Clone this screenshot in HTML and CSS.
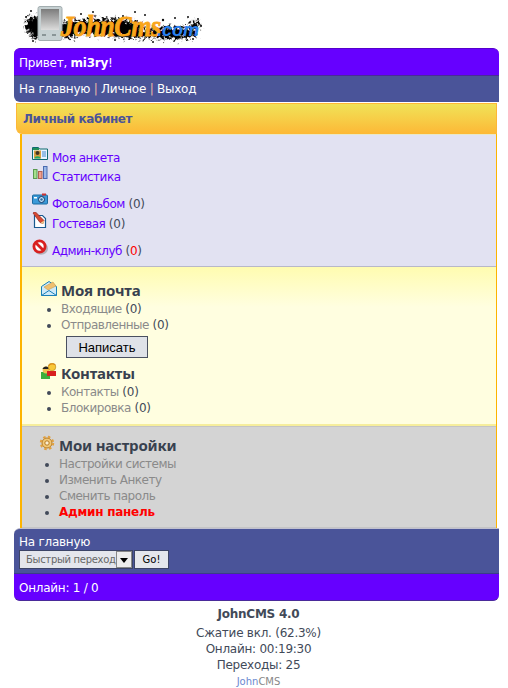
FILE: index.html
```html
<!DOCTYPE html>
<html lang="ru">
<head>
<meta charset="utf-8">
<title>Личный кабинет</title>
<link rel="stylesheet" href="styles.css">
</head>
<body>
<header class="logo">
<svg width="182" height="46" viewBox="0 0 182 46">
<defs>
<filter id="b1" x="-10%" y="-40%" width="120%" height="180%"><feTurbulence type="fractalNoise" baseFrequency=".35" numOctaves="2" seed="4" result="n"/><feGaussianBlur in="SourceGraphic" stdDeviation="1.200" result="g"/><feDisplacementMap in="g" in2="n" scale="14" xChannelSelector="R" yChannelSelector="G"/><feGaussianBlur stdDeviation=".5"/></filter>
<filter id="b2"><feGaussianBlur stdDeviation=".5"/></filter>
<linearGradient id="scr" x1="0" y1="0" x2="0" y2="1"><stop offset="0" stop-color="#7c7c7c"/><stop offset="1" stop-color="#dcdcdc"/></linearGradient>
</defs>
<g filter="url(#b1)" fill="#000">
<ellipse cx="12" cy="25" rx="10" ry="9"/><ellipse cx="15" cy="35" rx="8" ry="3"/><ellipse cx="45" cy="30" rx="10" ry="8"/>
<ellipse cx="80" cy="27" rx="40" ry="8"/><ellipse cx="148" cy="33" rx="26" ry="6"/><ellipse cx="110" cy="34" rx="22" ry="4"/><ellipse cx="172" cy="25" rx="5" ry="4"/>
</g>
<g fill="#111" filter="url(#b2)">
<circle cx="3" cy="17" r="1"/><circle cx="8" cy="11" r="1"/><circle cx="178" cy="26" r="1"/><circle cx="175" cy="19" r="1"/><circle cx="58" cy="14" r="1"/><circle cx="122" cy="15" r="1"/><circle cx="140" cy="20" r="1.200"/><circle cx="152" cy="18" r="1"/><circle cx="170" cy="39" r="1"/><circle cx="10" cy="41" r="1"/><circle cx="92" cy="40" r="1"/><circle cx="130" cy="42" r="1"/><circle cx="165" cy="17" r="1"/><circle cx="70" cy="12" r="1"/><circle cx="100" cy="16" r="1"/><circle cx="112" cy="12" r="1"/>
</g>
<rect x="15" y="6.500" width="24" height="34" rx="2" fill="#c6d0d2" stroke="#a2adaf"/>
<rect x="18" y="9" width="18" height="21" fill="url(#scr)"/>
<rect x="19" y="34" width="4" height="2" fill="#8a9597"/><rect x="29" y="34" width="4" height="2" fill="#8a9597"/>
<text transform="translate(38 36) scale(1 1.150)" class="logo-john">JohnCms</text>
<text x="134" y="36" class="logo-com">.com</text>
</svg>
</header>

<div class="top-bar">Привет, <b>mi3ry</b>!</div>
<nav class="nav-bar">На главную <span class="sep">|</span> Личное <span class="sep">|</span> Выход</nav>

<main class="cabinet">
<h1 class="cab-title">Личный кабинет</h1>
<div class="cab-body">
<section class="menu">
<div class="menu-group g1">
<div class="menu-row"><svg class="ic" viewBox="0 0 16 16"><path d="M.5 1.500h6l1 1.500h8v10.500H.500z" fill="#e8f4ff" stroke="#0f6a70"/><path d="M1 2h6v2H1z" fill="#22905a"/><rect x="2" y="4.500" width="7" height="8" fill="#d8a040"/><circle cx="5.500" cy="7" r="2" fill="#432"/><path d="M2.500 12.500c0-3 6-3 6 0z" fill="#2a6"/><path d="M10 6h4M10 8h4M10 10h4" stroke="#48c"/></svg><a>Моя анкета</a></div>
<div class="menu-row"><svg class="ic" viewBox="0 0 16 16"><rect x="1.500" y="4.500" width="3.500" height="9" fill="#a4e08c" stroke="#5a9a50"/><rect x="6.500" y="6.500" width="3.500" height="7" fill="#f0a090" stroke="#b06050"/><rect x="11.500" y="1.500" width="3.500" height="12" fill="#9ab8e8" stroke="#4a6ab0"/></svg><a>Статистика</a></div>
</div>
<div class="menu-group g2">
<div class="menu-row"><svg class="ic" viewBox="0 0 16 16"><rect x=".5" y="3" width="15" height="9" rx="1" fill="#3b9ad8" stroke="#1a6aa0"/><rect x="10" y="1.500" width="4" height="2" fill="#c33"/><circle cx="9.500" cy="7.500" r="3" fill="#bfe4fa" stroke="#136"/><circle cx="9.500" cy="7.500" r="1.200" fill="#369"/><rect x="2" y="5" width="3" height="1.500" fill="#fff"/></svg><a>Фотоальбом</a> (0)</div>
<div class="menu-row tall"><svg class="ic" viewBox="0 0 16 16"><path d="M2.500 3.500h8l3 3v9h-11z" fill="#fff" stroke="#1a5a90" stroke-width="1.200"/><path d="M1 1l2-1.500 9 9-1 3-3-1z" fill="#d84a30" stroke="#822" stroke-width=".7"/><path d="M8.500 11l3 1 .5-3.500z" fill="#f0d090"/></svg><a>Гостевая</a> (0)</div>
</div>
<div class="menu-group g3">
<div class="menu-row"><svg class="ic" viewBox="0 0 16 16"><ellipse cx="9" cy="9.500" rx="7" ry="6.200" fill="#8a8a90" opacity=".55"/><circle cx="7.500" cy="7.500" r="5.600" fill="#fff" stroke="#d82020" stroke-width="2.800"/><path d="M3.500 3.500l8 8" stroke="#d82020" stroke-width="2.800"/></svg><a>Админ-клуб</a> (<span class="red">0</span>)</div>
</div>
</section>

<section class="mail">
<h2 class="sec-head"><svg class="ic" viewBox="0 0 16 16"><path d="M.5 6.500l7.500-5 7.500 5v9H.5z" fill="#cfeaf8" stroke="#1a80b8"/><path d="M3 7l9-5 3 4-8 4z" fill="#f0c070" stroke="#c09040" stroke-width=".5"/><path d="M.5 15.500l7.500-5 7.500 5" fill="none" stroke="#1a80b8"/></svg>Моя почта</h2>
<ul>
<li><a class="grey">Входящие</a> (0)</li>
<li><a class="grey">Отправленные</a> (0)</li>
</ul>
<button class="write" type="button">Написать</button>
<h2 class="sec-head"><svg class="ic" viewBox="0 0 16 16"><rect x="0" y="9" width="9" height="7" fill="#3cae3c"/><circle cx="5" cy="7" r="3.400" fill="#f0c050"/><path d="M1.500 6c1-3.500 6-3.500 7 0z" fill="#222"/><rect x="6" y="8" width="9" height="5" fill="#d82020"/><circle cx="11" cy="4" r="3.800" fill="#f8c838" stroke="#b08010" stroke-width=".6"/><path d="M7.500 3c1.500-2.500 5-2.500 7-1" stroke="#e08010" fill="none"/></svg>Контакты</h2>
<ul>
<li><a class="grey">Контакты</a> (0)</li>
<li><a class="grey">Блокировка</a> (0)</li>
</ul>
</section>

<section class="settings">
<h2 class="sec-head"><svg class="ic" viewBox="0 0 16 16"><circle cx="8" cy="8" r="5" fill="#f0c878" stroke="#b87a20"/><circle cx="8" cy="8" r="6.200" fill="none" stroke="#e0a040" stroke-width="2" stroke-dasharray="2.500 2.400"/><circle cx="8" cy="8" r="2.200" fill="#fbeed0" stroke="#b87a20"/></svg>Мои настройки</h2>
<ul>
<li><a class="grey">Настройки системы</a></li>
<li><a class="grey">Изменить Анкету</a></li>
<li><a class="grey">Сменить пароль</a></li>
<li><b class="red">Админ панель</b></li>
</ul>
</section>
</div>
</main>

<div class="bottom-nav">
<div>На главную</div>
<div class="jump">
<div class="select"><span class="select-label">Быстрый переход</span><span class="select-arrow"></span></div>
<button class="go" type="button">Go!</button>
</div>
</div>
<div class="bottom-bar">Онлайн: 1 / 0</div>

<footer class="foot">
<div class="foot-title">JohnCMS 4.0</div>
<div>Сжатие вкл. (62.3%)</div>
<div>Онлайн: 00:19:30</div>
<div>Переходы: 25</div>
<div class="foot-link"><span class="foot-john">John</span>CMS</div>
</footer>
</body>
</html>
```
FILE: styles.css
```css
* { box-sizing: border-box; }
html, body { margin: 0; padding: 0; }
body {
  padding: 0 9px 0 14px;
  background: #fff;
  color: #424a59;
  font: 12px/16px "DejaVu Sans", Verdana, sans-serif;
  letter-spacing: -.25px;
  height: 688px;
  overflow: hidden;
}
.logo { height: 48px; padding: 0 0 0 9px; }
.logo svg { display: block; }
.logo-john { font: italic 700 26px "Liberation Serif", serif; letter-spacing: -.4px; fill: #f9a51a; stroke: #f9a51a; stroke-width: .7px; }
.logo-com { font: italic 700 18px "Liberation Sans", sans-serif; letter-spacing: 0; fill: #2a80f0; }
.top-bar {
  height: 28px;
  padding: 6px 5px;
  background: #6600ff;
  color: #fff;
  border-top: 1px solid #5500cc;
  border-bottom: 1px solid #4a2a9a;
  border-radius: 6px 6px 0 0;
}
.nav-bar {
  height: 26px;
  padding: 5px;
  background: #4a5499;
  color: #fff;
  border-radius: 0 0 0 6px;
}
.sep { color: #e8b8a8; }
.cabinet { margin: 1px 2px 0; }
.cab-title {
  margin: 0;
  height: 31px;
  padding: 7px 6px;
  font-size: 12px;
  line-height: 16px;
  font-weight: 700;
  letter-spacing: -.4px;
  color: #4a5499;
  background: linear-gradient(#f0e358, #fdb836);
  border: 1px solid #fdb836;
  border-bottom: 0;
  border-radius: 0 0 0 6px;
}
.cab-body { margin-left: 4px; border: solid #fdb400; border-width: 0 1px 0 2px; }
.menu { height: 133px; padding: 0 0 0 10px; background: #e2e2f2; border-top: 1px solid #e8e8c8; border-bottom: 1px solid #b8b8c8; }
.g1 { padding-top: 11px; }
.g2 { padding-top: 8px; }
.g3 { padding-top: 8px; }
.g1 .menu-row:first-child { height: 20px; }
.menu-row { display: flex; align-items: flex-end; height: 19px; color: #424a59; white-space: pre; }
.menu-row.tall { height: 20px; }
.menu-row .ic { margin: 0 4px 4px 0; }
a { color: #6600ff; letter-spacing: -.5px; }
a.grey { color: #8a8a8a; }
.red { color: #ff0000; }
.ic { width: 16px; height: 16px; flex: none; display: block; }
.mail { height: 159px; padding: 12px 0 0 19px; background: linear-gradient(#fffcb0, #fffee0 40px); border-bottom: 2px solid #f6ee9c; }
.settings { height: 102px; padding: 7px 0 0 17px; background: #d4d4d4; border-top: 1px solid #c4c4c4; border-bottom: 1px solid #c4c4c4; }
.sec-head { display: flex; align-items: center; gap: 4px; margin: 0; height: 22px; font: 700 15px/22px "Noto Sans", sans-serif; letter-spacing: -.2px; color: #38414f; }
.sec-head .ic { margin-top: -4px; }
ul { margin: 0; padding: 0 0 0 20px; list-style: disc; }
li { height: 16px; line-height: 16px; }
.write {
  display: block;
  width: 82px;
  height: 22px;
  margin: 3px 0 4px 25px;
  padding: 0;
  background: #dfe2e8;
  border: 1px solid #4a5060;
  color: #000;
  font: 13px "Liberation Sans", sans-serif;
}
.bottom-nav {
  height: 45px;
  padding: 5px 5px 0;
  background: #4a5499;
  color: #fff;
  border-top: 1px solid #c0c0d0;
  border-radius: 6px 0 0 0;
  line-height: 16px;
}
.jump { display: flex; gap: 1px; height: 20px; }
.select { display: flex; width: 114px; height: 19px; background: #e4e6ec; border: 1px solid #3c4466; }
.select-label { flex: 1; min-width: 0; padding-left: 6px; font-size: 10px; line-height: 17px; letter-spacing: -.3px; color: #666; white-space: nowrap; }
.select-arrow { position: relative; width: 16px; flex: none; background: #ededed; border: 1px solid #888; }
.select-arrow::after { content: ""; position: absolute; left: 3px; top: 6px; border: 4px solid transparent; border-top: 5px solid #000; border-bottom: 0; }
.go { width: 35px; height: 19px; padding: 0; background: #e4e6ec; border: 1px solid #3c4466; color: #000; font: 10px "DejaVu Sans", sans-serif; }
.bottom-bar {
  height: 28px;
  padding: 6px 5px;
  background: #6600ff;
  color: #fff;
  border-top: 1px solid #3c3c88;
  border-bottom: 1px solid #4a2a9a;
  border-radius: 0 0 6px 6px;
}
.foot { margin-top: 5px; padding-left: 4px; text-align: center; }
.foot-title { font-weight: 700; margin-bottom: 3px; }
.foot-link { font-size: 10px; line-height: 17px; letter-spacing: 0; color: #888; }
.foot-john { color: #6a88d0; }
```
